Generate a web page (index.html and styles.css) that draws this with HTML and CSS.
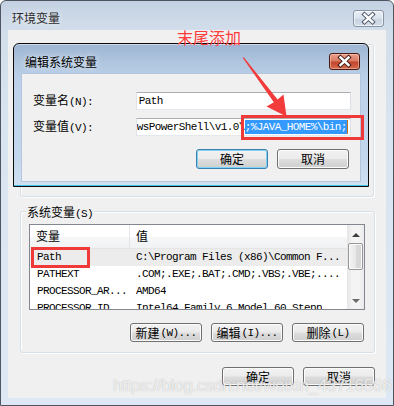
FILE: index.html
```html
<!DOCTYPE html>
<html>
<head>
<meta charset="utf-8">
<link rel="stylesheet" href="styles.css">
</head>
<body>
<div class="win">
  <div class="titlebar">
    <span class="title">环境变量</span>
    <span class="close close-inactive">
      <svg width="31" height="17" viewBox="0 0 31 17"><path d="M11.5 4.5 L19.5 12 M19.5 4.5 L11.5 12" stroke="#4a5566" stroke-width="4.4" stroke-linecap="square"/><path d="M11.5 4.5 L19.5 12 M19.5 4.5 L11.5 12" stroke="#ffffff" stroke-width="2.4" stroke-linecap="square"/></svg>
    </span>
  </div>
  <div class="client">
    <div class="group user-group"></div>
    <div class="group sys-group">
      <div class="group-head"><span class="group-label">系统变量<span class="mono">(S)</span></span></div>
      <div class="listview">
        <div class="lv-main">
          <div class="lv-header">
            <div class="col1">变量</div>
            <div class="col2">值</div>
          </div>
          <div class="lv-row selected"><div class="col1 mono">Path</div><div class="col2 mono">C:\Program Files (x86)\Common F...</div></div>
          <div class="lv-row"><div class="col1 mono">PATHEXT</div><div class="col2 mono">.COM;.EXE;.BAT;.CMD;.VBS;.VBE;....</div></div>
          <div class="lv-row"><div class="col1 mono">PROCESSOR_AR...</div><div class="col2 mono">AMD64</div></div>
          <div class="lv-row"><div class="col1 mono">PROCESSOR_ID...</div><div class="col2 mono">Intel64 Family 6 Model 60 Stepp</div></div>
        </div>
        <div class="sb">
          <div class="sb-btn"><span class="arr-up"></span></div>
          <div class="sb-thumb"></div>
          <div class="sb-track"></div>
          <div class="sb-btn"><span class="arr-down"></span></div>
        </div>
      </div>
      <div class="btn-row">
        <div class="btn">新建<span class="mono">(W)...</span></div>
        <div class="btn">编辑<span class="mono">(I)...</span></div>
        <div class="btn">删除<span class="mono">(L)</span></div>
      </div>
    </div>
    <div class="btn-row bottom-row">
      <div class="btn">确定</div>
      <div class="btn">取消</div>
    </div>
  </div>

  <div class="dialog">
    <div class="dlg-title">
      <span class="title">编辑系统变量</span>
      <span class="close close-active">
        <svg width="31" height="17" viewBox="0 0 31 17"><path d="M11.5 4.5 L19.5 12 M19.5 4.5 L11.5 12" stroke="#3a1a14" stroke-width="4.4" stroke-linecap="square"/><path d="M11.5 4.5 L19.5 12 M19.5 4.5 L11.5 12" stroke="#ffffff" stroke-width="2.4" stroke-linecap="square"/></svg>
      </span>
    </div>
    <div class="dlg-client">
      <div class="field">
        <span class="field-label">变量名<span class="mono">(N):</span></span>
        <div class="input mono">Path</div>
      </div>
      <div class="field">
        <span class="field-label">变量值<span class="mono">(V):</span></span>
        <div class="input mono"><span class="clip">wsPowerShell\v1.0\</span><span class="sel">;%JAVA_HOME%\bin;</span><span class="caret"></span></div>
      </div>
      <div class="btn-row dlg-btns">
        <div class="btn btn-default">确定</div>
        <div class="btn">取消</div>
      </div>
    </div>
  </div>

  <div class="overlay">
    <div class="note">末尾添加</div>
    <svg class="arrow" width="394" height="406" viewBox="0 0 394 406"><polygon points="242.5,57.5 244,57.5 277.6,99.6 283.5,94.5 286.5,116.5 266.5,106.5 273.8,102.2" fill="#f23b3b"/></svg>
    <div class="redbox box-value"></div>
    <div class="redbox box-path"></div>
    <div class="watermark">https://blog.csdn.net/weixin_43716566</div>
  </div>
</div>
</body>
</html>
```

FILE: styles.css
```css
html, body {
  margin: 0;
  padding: 0;
  background: #ffffff;
}
body {
  width: 394px;
  height: 406px;
  overflow: hidden;
  font-family: "Noto Sans CJK SC", "Liberation Sans", sans-serif;
  font-size: 12px;
  color: #000;
}
.mono {
  font-family: "Liberation Mono", "Noto Sans CJK SC", monospace;
  font-size: 11px;
  letter-spacing: -0.6px;
}
.win {
  position: relative;
  width: 394px;
  height: 406px;
  box-sizing: border-box;
  border: 1px solid #4e5560;
  border-radius: 6px 6px 0 0;
  padding: 0 7px 7px 7px;
  display: flex;
  flex-direction: column;
  overflow: hidden;
  background: linear-gradient(180deg, #c3d1e2 0px, #d3deeb 30px, #d9e4f1 120px, #dde8f4 406px);
}
.titlebar {
  height: 29px;
  display: flex;
  justify-content: space-between;
  align-items: flex-start;
  flex-shrink: 0;
}
.title {
  line-height: 16px;
  margin-top: 9px;
  margin-left: 4px;
  color: #2b2b2b;
  text-shadow: 0 0 6px rgba(255,255,255,0.9);
}
.close {
  display: block;
  width: 31px;
  height: 17px;
  box-sizing: border-box;
  border-radius: 3px;
  margin-top: 9px;
  margin-right: 2px;
  position: relative;
}
.close svg {
  position: absolute;
  left: -1px;
  top: -1px;
}
.close-inactive {
  border: 1px solid #8794a6;
  background: linear-gradient(180deg, #e9eef5 0%, #d9e2ec 50%, #c8d3e0 51%, #d3dde9 100%);
  box-shadow: inset 0 0 0 1px rgba(255,255,255,0.6);
}
.close-active {
  border: 1px solid #4a1a10;
  background: linear-gradient(180deg, #eaa08c 0%, #d97a63 48%, #c2432b 52%, #d46a4c 100%);
  box-shadow: inset 0 0 0 1px rgba(255,210,200,0.5);
  margin-right: 1px;
}
.client {
  flex: 1;
  background: #f0f0f0;
  display: flex;
  flex-direction: column;
}
.group {
  box-sizing: border-box;
  border: 1px solid #d5dfe5;
  border-radius: 3px;
  box-shadow: inset 1px 1px 0 #ffffff, 1px 1px 0 #ffffff;
}
.user-group {
  margin: 14px 12px 0 12px;
  height: 153px;
}
.sys-group {
  margin: 14px 11px 0 12px;
  height: 142px;
  padding: 0 9px 10px 8px;
}
.group-head {
  height: 7px;
}
.group-label {
  display: inline-block;
  position: relative;
  top: -9px;
  margin-left: -3px;
  padding: 0 1px;
  line-height: 16px;
  background: #f0f0f0;
  color: #000;
}
.listview {
  margin-top: 5px;
  height: 86px;
  box-sizing: border-box;
  border: 1px solid #828790;
  background: #ffffff;
  display: flex;
  overflow: hidden;
}
.lv-main {
  flex: 1;
  overflow: hidden;
}
.lv-header {
  display: flex;
  height: 24px;
  box-sizing: border-box;
  border-bottom: 1px solid #e5e5e5;
  background: linear-gradient(180deg, #ffffff 0%, #ffffff 50%, #f6f7f8 51%, #f1f2f4 100%);
  line-height: 22px;
}
.col1 {
  width: 100px;
  box-sizing: border-box;
  padding-left: 7px;
  flex-shrink: 0;
  white-space: nowrap;
  overflow: hidden;
}
.lv-header .col1 {
  border-right: 1px solid #e3e5e8;
  padding-left: 6px;
}
.col2 {
  padding-left: 6px;
  white-space: nowrap;
  overflow: hidden;
}
.lv-header .col2 {
  padding-left: 6px;
}
.lv-row {
  display: flex;
  height: 17px;
  line-height: 17px;
}
.lv-row.selected {
  background: #ececec;
}
.sb {
  width: 17px;
  flex-shrink: 0;
  display: flex;
  flex-direction: column;
  background: linear-gradient(90deg, #e6e6e6 0%, #f3f3f3 30%, #f4f4f4 70%, #eaeaea 100%);
}
.sb-btn {
  height: 17px;
  display: flex;
  align-items: center;
  justify-content: center;
  flex-shrink: 0;
}
.arr-up {
  width: 0;
  height: 0;
  border-left: 4px solid transparent;
  border-right: 4px solid transparent;
  border-bottom: 4px solid #3d3d3d;
  margin-top: 3px;
}
.arr-down {
  width: 0;
  height: 0;
  border-left: 4px solid transparent;
  border-right: 4px solid transparent;
  border-top: 4px solid #6a6a6a;
}
.sb-thumb {
  height: 27px;
  margin: 1px 1px 0 1px;
  box-sizing: border-box;
  border: 1px solid #979797;
  border-radius: 2px;
  background: linear-gradient(90deg, #f4f4f4 0%, #e8e8e8 50%, #d9d9d9 51%, #d6d6d6 100%);
  box-shadow: inset 0 0 0 1px #fafafa;
  flex-shrink: 0;
}
.sb-track {
  flex: 1;
}
.btn-row {
  display: flex;
  justify-content: flex-end;
  gap: 9px;
}
.sys-group .btn-row {
  margin-top: 13px;
  margin-right: 1px;
}
.bottom-row {
  margin-top: 14px;
  padding-right: 11px;
}
.btn {
  width: 72px;
  height: 19px;
  box-sizing: border-box;
  border: 1px solid #707070;
  border-radius: 3px;
  background: linear-gradient(180deg, #f2f2f2 0%, #ebebeb 48%, #dddddd 52%, #cfcfcf 100%);
  box-shadow: inset 0 0 0 1px #fbfbfb;
  display: flex;
  align-items: center;
  justify-content: center;
  line-height: 16px;
  white-space: nowrap;
}
.btn .mono {
  margin-left: 1px;
}
.btn-default {
  border-color: #3c7fb1;
  box-shadow: inset 0 0 0 1px #7fd3f5;
}
.dialog {
  position: absolute;
  left: 12px;
  top: 42px;
  width: 356px;
  height: 144px;
  box-sizing: border-box;
  border: 1px solid #0a0a0a;
  border-radius: 6px 6px 0 0;
  padding: 0 7px 4px 7px;
  display: flex;
  flex-direction: column;
  background: linear-gradient(180deg, #9db5d3 0px, #b1c7e0 20px, #bdd2ea 40px, #c2d6ec 110px, #cfe0f2 143px);
  box-shadow: inset 0 -1px 0 #41c4e6, inset 0 1px 0 rgba(255,255,255,0.5);
}
.dlg-title {
  height: 29px;
  display: flex;
  justify-content: space-between;
  align-items: flex-start;
  flex-shrink: 0;
}
.dlg-title .title {
  margin-left: 4px;
  margin-top: 10px;
  color: #000;
}
.dlg-client {
  flex: 1;
  background: #f0f0f0;
  box-sizing: border-box;
  border: 1px solid #b3c6dc;
  padding: 18px 9px 12px 10px;
  display: flex;
  flex-direction: column;
}
.field {
  display: flex;
  align-items: center;
  height: 18px;
  margin-bottom: 8px;
}
.field + .field {
  margin-bottom: 0;
}
.field-label {
  width: 103px;
  padding-left: 1px;
  line-height: 16px;
  white-space: nowrap;
}
.input {
  width: 216px;
  height: 18px;
  box-sizing: border-box;
  border: 1px solid;
  border-color: #abadb3 #dbdfe6 #e3e9ef #e2e3ea;
  background: #ffffff;
  padding-left: 2px;
  line-height: 16px;
  white-space: nowrap;
  overflow: hidden;
  display: flex;
  align-items: center;
}
.clip {
  margin-left: -2px;
}
.sel {
  background: #3399ff;
  color: #ffffff;
  line-height: 14px;
}
.caret {
  display: inline-block;
  width: 1px;
  height: 14px;
  background: #c8701a;
}
.dlg-btns {
  margin-top: 13px;
  padding-right: 2px;
}
.dlg-btns .btn {
  height: 20px;
}
.overlay {
  position: absolute;
  left: -1px;
  top: -1px;
  width: 394px;
  height: 406px;
  pointer-events: none;
}
.note {
  position: absolute;
  left: 177px;
  top: 28px;
  font-size: 16px;
  line-height: 18px;
  color: #ff3b3b;
}
.arrow {
  position: absolute;
  left: 0;
  top: 0;
}
.redbox {
  position: absolute;
  box-sizing: border-box;
  border: 3px solid #f03a3a;
}
.box-value {
  left: 241px;
  top: 115px;
  width: 123px;
  height: 25px;
}
.box-path {
  left: 31px;
  top: 247px;
  width: 59px;
  height: 21px;
}
.watermark {
  position: absolute;
  left: 113px;
  top: 376px;
  font-family: "Liberation Sans", Arial, sans-serif;
  font-size: 17px;
  letter-spacing: -0.3px;
  line-height: 20px;
  color: rgba(255,255,255,0.8);
  text-shadow: 0 0 1px rgba(110,110,110,0.55);
  white-space: nowrap;
}
```
